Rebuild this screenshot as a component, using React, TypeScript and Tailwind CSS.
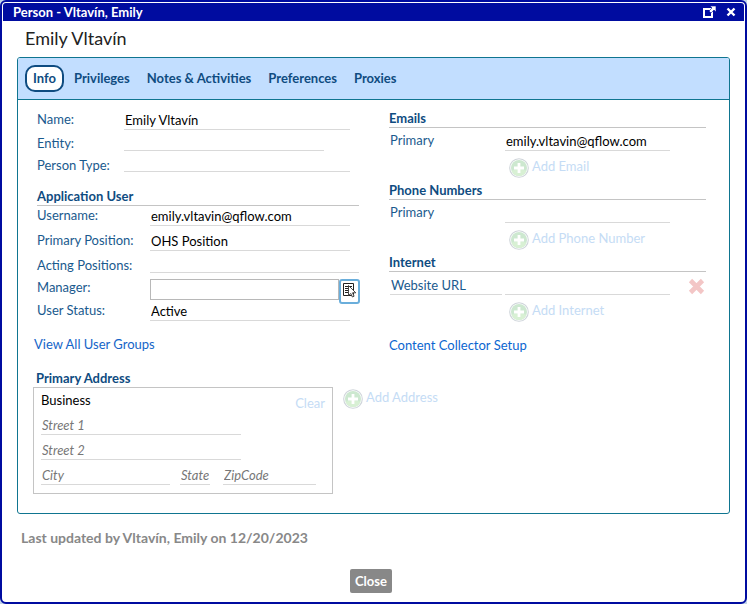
import React from "react";

const line = "border-b border-[#d9d9d9] bg-transparent px-px text-black outline-none";
const hint = "placeholder:text-[#777] placeholder:italic";

function Field({
  id,
  label,
  value,
  row,
  labelWidth,
  input,
}: {
  id: string;
  label: string;
  value?: string;
  row: string;
  labelWidth: string;
  input: string;
}) {
  return (
    <div className={`flex items-start ${row}`}>
      <label htmlFor={id} className={`shrink-0 ${labelWidth}`}>
        {label}
      </label>
      <input id={id} defaultValue={value} className={`min-w-0 flex-1 ${line} ${input}`} />
    </div>
  );
}

function PlusIcon() {
  return (
    <svg width="20" height="20" viewBox="0 0 20 20" className="shrink-0" aria-hidden="true">
      <circle cx="10" cy="10" r="9.3" fill="#fff" stroke="#cfd5da" strokeWidth="1.1" />
      <circle cx="10" cy="10" r="8" fill="#cde8d0" />
      <path d="M2.6 13a8 8 0 0 0 14.8 0C14 11 6 11 2.6 13z" fill="#d8f0d4" />
      <path d="M10 5v10M5 10h10" stroke="#fff" strokeWidth="2.8" />
    </svg>
  );
}

function AddButton({ label }: { label: string }) {
  return (
    <button type="button" className="flex h-5 items-start gap-[3px] leading-4 text-[#c5dcf5]">
      <PlusIcon />
      <span>{label}</span>
    </button>
  );
}

function SectionTitle({ children }: { children: React.ReactNode }) {
  return <h2 className="border-b border-[#c4c4c4] font-bold text-[#0f4c81]">{children}</h2>;
}

function ContactSection({
  title,
  add,
  children,
}: {
  title: string;
  add: string;
  children: React.ReactNode;
}) {
  return (
    <section className="h-[72px]">
      <SectionTitle>{title}</SectionTitle>
      <div className="mt-[3px] flex h-5 items-start">{children}</div>
      <div className="mt-[7px] pl-[120px]">
        <AddButton label={add} />
      </div>
    </section>
  );
}

function Tab({ label, active }: { label: string; active?: boolean }) {
  return (
    <button
      type="button"
      role="tab"
      aria-selected={!!active}
      className={
        active
          ? "mr-px h-[27px] rounded-[10px] border-2 border-[#0f4c81] bg-white px-1.5 pb-0.5 font-bold"
          : "h-[27px] px-2 pb-0.5 font-bold"
      }
    >
      {label}
    </button>
  );
}

export default function App() {
  return (
    <div className="min-h-screen bg-[#c3d5ea] font-['Lato','Liberation_Sans',sans-serif] text-[13px] leading-[18px] text-[#1a5a8e]">
      <div className="flex min-h-screen flex-col rounded-md border-2 border-[#000ca0] bg-white px-px pt-px">
        <header className="flex h-[18px] items-center justify-between rounded-t-[3px] bg-[#000ca0] pr-2 pl-2.5 text-white">
          <span className="font-bold">Person - Vltavín, Emily</span>
          <div className="flex items-center gap-[9px]">
            <button type="button" aria-label="Open in new window">
              <svg width="14" height="12" viewBox="0 0 14 12" className="block">
                <path d="M1 3h8v8H1z" fill="none" stroke="#fff" strokeWidth="2" />
                <path d="M7 0h6v6l-2-2-3 3-2-2 3-3z" fill="#fff" stroke="#000ca0" strokeWidth="0.6" />
              </svg>
            </button>
            <button type="button" aria-label="Close window">
              <svg width="10" height="10" viewBox="0 0 10 10" className="block">
                <path d="M1.5 1.5l7 7M8.5 1.5l-7 7" stroke="#fff" strokeWidth="2.4" />
              </svg>
            </button>
          </div>
        </header>

        <main className="flex flex-1 flex-col px-3.5">
          <h1 className="pt-[5px] pl-2 text-[18px] leading-6 text-[#222]">Emily Vltavín</h1>

          <div className="mt-[7px] overflow-hidden rounded-[3px] border border-[#0f7590]">
            <div
              role="tablist"
              className="flex h-[42px] items-center gap-px border-b border-[#0f7590] bg-[#c2deff] px-[7px] text-[#0f4c81]"
            >
              <Tab label="Info" active />
              <Tab label="Privileges" />
              <Tab label="Notes & Activities" />
              <Tab label="Preferences" />
              <Tab label="Proxies" />
            </div>

            <div className="flex gap-[30px] pt-[9px] pr-[23px] pl-[19px]">
              <div className="w-[322px] shrink-0 pt-px">
                <Field id="name" label="Name:" value="Emily Vltavín" row="h-6" labelWidth="w-[87px]" input="h-5 mr-[9px]" />
                <Field id="entity" label="Entity:" row="h-[22px]" labelWidth="w-[87px]" input="h-[17px] mr-[35px]" />
                <Field id="type" label="Person Type:" row="h-[31px]" labelWidth="w-[87px]" input="h-4 mr-[9px]" />
                <SectionTitle>Application User</SectionTitle>
                <Field id="user" label="Username:" value="emily.vltavin@qflow.com" row="h-[25px]" labelWidth="w-[113px]" input="h-5 mr-[9px]" />
                <Field id="position" label="Primary Position:" value="OHS Position" row="h-[25px]" labelWidth="w-[113px]" input="h-5 mr-[9px]" />
                <Field id="acting" label="Acting Positions:" row="h-[22px]" labelWidth="w-[113px]" input="h-[17px]" />
                <div className="-mr-px flex h-[23px] items-start">
                  <label htmlFor="manager" className="w-[113px] shrink-0">
                    Manager:
                  </label>
                  <input
                    id="manager"
                    className="mt-px h-[21px] min-w-0 flex-1 border border-[#b8b8b8] px-px text-black outline-none"
                  />
                  <button
                    type="button"
                    aria-label="Choose manager"
                    className="mt-px flex h-[25px] w-[21px] shrink-0 items-start justify-center rounded-[3px] border-2 border-[#6aaedb] bg-white pt-px"
                  >
                    <svg width="15" height="16" viewBox="0 0 15 16">
                      <path d="M1.500 1.500h10v12h-10z" fill="#fff" stroke="#222" />
                      <path d="M3 4.500h4M3 6.500h3M3 8.500h3M3 10.500h3M8 4.500h2" stroke="#222" />
                      <path
                        d="M6.500 3.500v10l2.300-2 1.600 3.500 1.700-.8-1.600-3.400h3.300z"
                        fill="#fff"
                        stroke="#333"
                        strokeWidth=".9"
                      />
                    </svg>
                  </button>
                </div>
                <Field id="status" label="User Status:" value="Active" row="h-[34px]" labelWidth="w-[113px]" input="h-5 mr-[9px]" />
                <a href="#groups" className="-ml-[3px] block text-[#1565c8]">
                  View All User Groups
                </a>
              </div>

              <div className="min-w-0 flex-1">
                <ContactSection title="Emails" add="Add Email">
                  <label htmlFor="email" className="w-[116px] shrink-0 pl-px">
                    Primary
                  </label>
                  <input id="email" defaultValue="emily.vltavin@qflow.com" className={`mr-9 h-5 min-w-0 flex-1 ${line}`} />
                </ContactSection>
                <ContactSection title="Phone Numbers" add="Add Phone Number">
                  <label htmlFor="phone" className="w-[116px] shrink-0 pl-px">
                    Primary
                  </label>
                  <input id="phone" className={`mr-9 h-5 min-w-0 flex-1 ${line}`} />
                </ContactSection>
                <ContactSection title="Internet" add="Add Internet">
                  <input
                    aria-label="Internet address type"
                    defaultValue="Website URL"
                    className="mr-[3px] ml-px h-5 w-28 border-b border-[#d9d9d9] px-px outline-none"
                  />
                  <input aria-label="Internet address" className={`h-5 min-w-0 flex-1 ${line}`} />
                  <button type="button" aria-label="Remove internet address" className="w-9 shrink-0 pt-[3px] pl-[18px]">
                    <svg width="17" height="17" viewBox="0 0 17 17">
                      <path d="M2.500 2.500l12 12M14.500 2.500l-12 12" stroke="#f3c6c6" strokeWidth="4.600" />
                    </svg>
                  </button>
                </ContactSection>
                <a href="#collector" className="mt-[11px] block text-[#0b66d0]">
                  Content Collector Setup
                </a>
              </div>
            </div>

            <section className="mt-[15px] pr-[23px] pb-[19px] pl-[15px]">
              <h2 className="pl-[3px] font-bold text-[#0f4c81]">Primary Address</h2>
              <div className="flex items-start gap-2.5">
                <div className="w-[300px] border border-[#c4c4c4] px-[7px] pt-[3px] pb-2">
                  <div className="flex h-6 items-start justify-between">
                    <span className="text-black">Business</span>
                    <button type="button" className="pt-[3px] text-[#c5dcf5]">
                      Clear
                    </button>
                  </div>
                  <div className="flex flex-col gap-[5px]">
                    <input aria-label="Street 1" placeholder="Street 1" className={`h-5 w-[200px] ${hint} ${line}`} />
                    <input aria-label="Street 2" placeholder="Street 2" className={`h-5 w-[200px] ${hint} ${line}`} />
                    <div className="flex">
                      <input aria-label="City" placeholder="City" className={`mr-2.5 h-5 w-[129px] ${hint} ${line}`} />
                      <input aria-label="State" placeholder="State" className={`mr-[13px] h-5 w-[30px] ${hint} ${line}`} />
                      <input aria-label="ZipCode" placeholder="ZipCode" className={`h-5 w-[93px] ${hint} ${line}`} />
                    </div>
                  </div>
                </div>
                <div className="pt-0.5">
                  <AddButton label="Add Address" />
                </div>
              </div>
            </section>
          </div>

          <p className="mt-[15px] pl-1 text-[14px] font-bold text-[#888]">Last updated by Vltavín, Emily on 12/20/2023</p>
          <div className="mt-[22px] flex justify-center pr-[5px]">
            <button type="button" className="h-6 w-[42px] rounded-[2px] bg-[#888] font-bold text-white">
              Close
            </button>
          </div>
        </main>
      </div>
    </div>
  );
}
